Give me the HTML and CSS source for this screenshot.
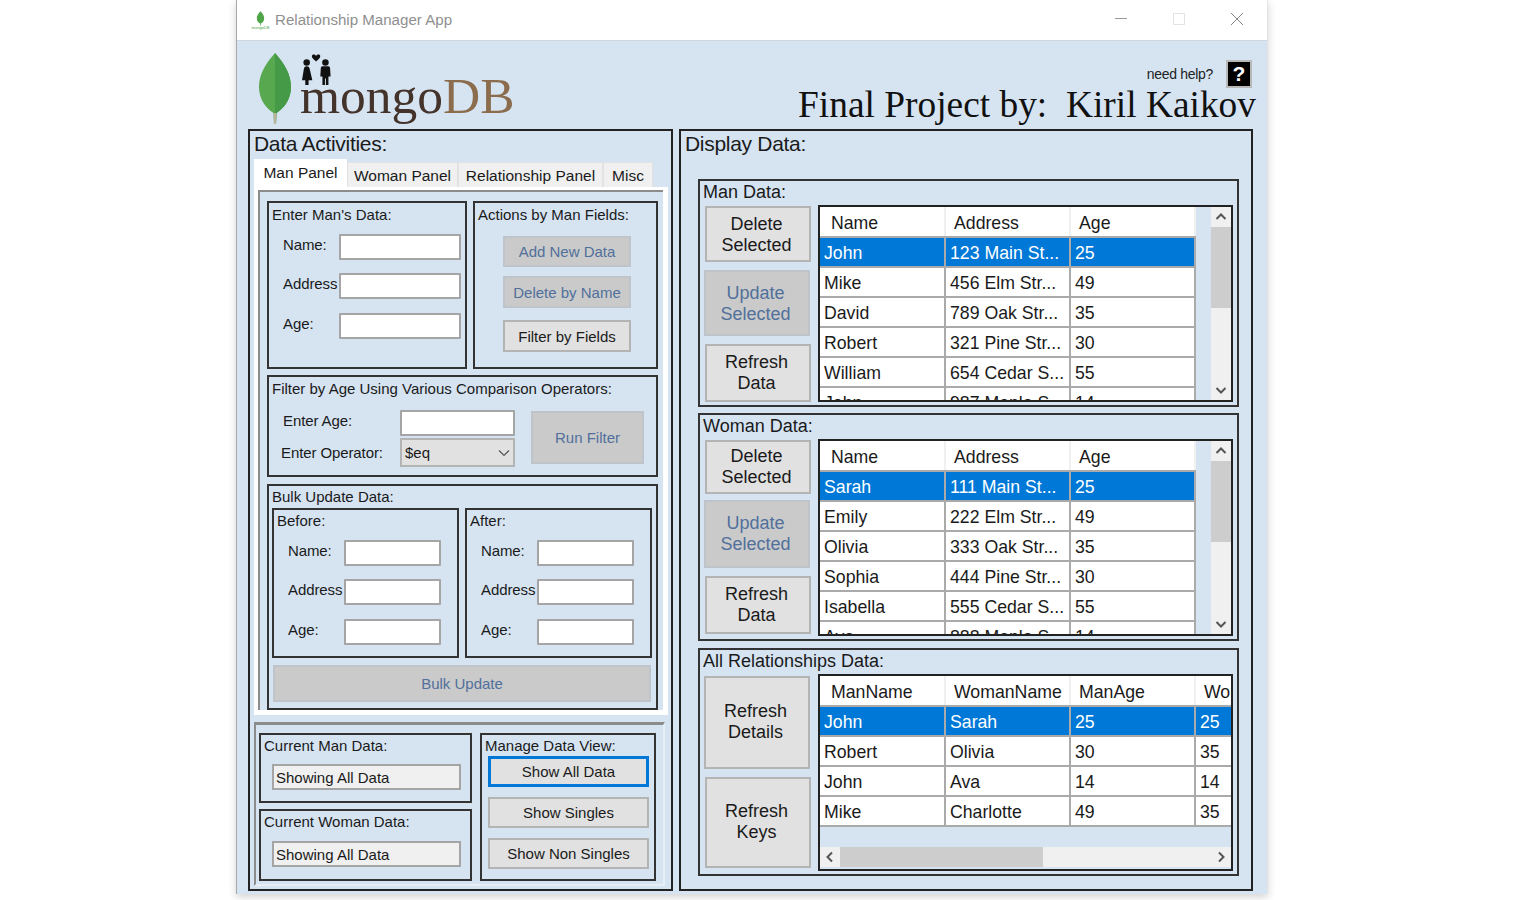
FILE: index.html
```html
<!DOCTYPE html>
<html lang="en">
<head>
    <meta charset="UTF-8">
    <meta name="viewport" content="width=device-width, initial-scale=1.0">
    <title>Relationship Manager App</title>
    <link rel="stylesheet" href="styles.css">
</head>
<body>
    <div class="window">
        <div class="titlebar">
            <div class="app-icon">
                <svg width="9" height="15" viewBox="0 0 10 16"><path d="M5 0C8 3 9.500 6 9 9 8.600 11.500 6.500 13 5.400 13.500L5.300 16H4.700L4.600 13.500C3.500 13 1.400 11.500 1 9 .5 6 2 3 5 0Z" fill="#4ea648"/></svg>
                <span class="app-icon-text">mongoDB</span>
            </div>
            <span class="app-name">Relationship Manager App</span>
            <div class="win-btns">
                <svg class="win-btn" width="14" height="14" viewBox="0 0 14 14"><path d="M1 6.500H13" stroke="#999" fill="none"/></svg>
                <svg class="win-btn" width="14" height="14" viewBox="0 0 14 14"><rect x="1.500" y="1.500" width="11" height="11" stroke="#e3e3e3" fill="none"/></svg>
                <svg class="win-btn" width="14" height="14" viewBox="0 0 14 14"><path d="M1 1L13 13M13 1L1 13" stroke="#888" fill="none"/></svg>
            </div>
        </div>

        <div class="header">
            <div class="logo">
                <svg class="leaf" width="34" height="72" viewBox="0 0 34 72">
                    <path d="M17 0C27 11 33 22 33 34 33 47 25 56 18.500 60L18 71H16L15.500 60C9 56 1 47 1 34 1 22 7 11 17 0Z" fill="#57a84f"/>
                    <path d="M17 0C27 11 33 22 33 34 33 47 25 56 18.500 60L18 71H17Z" fill="#459a47"/>
                    <path d="M15.500 60L16 71H18L18.500 60Z" fill="#b9b49a"/>
                </svg>
                <div class="logo-mark">
                    <svg class="couple" width="30" height="34" viewBox="0 0 32 34">
                        <circle cx="5" cy="9" r="3.500" fill="#111"/>
                        <path d="M5 13C7 13 8 14 8.500 17L11 28H7V33H3.500V28H0L1.800 17C2.200 14 3 13 5 13Z" fill="#111"/>
                        <circle cx="25" cy="9" r="3.500" fill="#111"/>
                        <path d="M22 13H28C29.500 13 30 14 30 16L30.500 24H28.200V33H25.500V26H24.500V33H21.800V24H19.500L20 16C20 14 20.500 13 22 13Z" fill="#111"/>
                        <path d="M15 8C12.500 5.500 10.500 4 10.500 2.300 10.500 .5 13.500 -.3 15 2 16.500 -.3 19.500 .5 19.500 2.300 19.500 4 17.500 5.500 15 8Z" fill="#111"/>
                    </svg>
                    <div class="wordmark"><span class="word-mongo">mongo</span><span class="word-db">DB</span></div>
                </div>
            </div>
            <div class="header-right">
                <div class="help-row">
                    <span class="help-text">need help?</span>
                    <span class="help-btn">?</span>
                </div>
                <div class="project-title">Final Project by:&nbsp; Kiril Kaikov</div>
            </div>
        </div>

        <div class="main">
            <div class="panel panel-left">
                <div class="panel-title">Data Activities:</div>
                <div class="tabs">
                    <div class="tab tab-active">Man Panel</div>
                    <div class="tab tab-woman">Woman Panel</div>
                    <div class="tab tab-rel">Relationship Panel</div>
                    <div class="tab tab-misc">Misc</div>
                </div>
                <div class="tab-page">
                    <div class="tab-inner">
                        <div class="top-row">
                            <div class="group group-enter">
                                <div class="group-title">Enter Man's Data:</div>
                                <div class="field-list">
                                    <div class="field"><label>Name:</label><input type="text"></div>
                                    <div class="field"><label>Address</label><input type="text"></div>
                                    <div class="field"><label>Age:</label><input type="text"></div>
                                </div>
                            </div>
                            <div class="group group-actions">
                                <div class="group-title">Actions by Man Fields:</div>
                                <div class="action-list">
                                    <button class="btn btn-off btn-add">Add New Data</button>
                                    <button class="btn btn-off btn-del">Delete by Name</button>
                                    <button class="btn btn-filter">Filter by Fields</button>
                                </div>
                            </div>
                        </div>

                        <div class="group group-age">
                            <div class="group-title">Filter by Age Using Various Comparison Operators:</div>
                            <div class="age-row">
                                <div class="age-labels">
                                    <label class="lbl-age">Enter Age:</label>
                                    <label class="lbl-op">Enter Operator:</label>
                                </div>
                                <div class="age-inputs">
                                    <input type="text" class="age-input">
                                    <div class="select">$eq
                                        <svg width="12" height="8" viewBox="0 0 12 8"><path d="M1 1.500L6 6.500 11 1.500" stroke="#555" fill="none" stroke-width="1.200"/></svg>
                                    </div>
                                </div>
                                <button class="btn btn-off btn-run">Run Filter</button>
                            </div>
                        </div>

                        <div class="group group-bulk">
                            <div class="group-title">Bulk Update Data:</div>
                            <div class="bulk-row">
                                <div class="group bulk-box">
                                    <div class="group-title">Before:</div>
                                    <div class="field-list field-list-bulk">
                                        <div class="field"><label>Name:</label><input type="text"></div>
                                        <div class="field"><label>Address</label><input type="text"></div>
                                        <div class="field"><label>Age:</label><input type="text"></div>
                                    </div>
                                </div>
                                <div class="group bulk-box">
                                    <div class="group-title">After:</div>
                                    <div class="field-list field-list-bulk">
                                        <div class="field"><label>Name:</label><input type="text"></div>
                                        <div class="field"><label>Address</label><input type="text"></div>
                                        <div class="field"><label>Age:</label><input type="text"></div>
                                    </div>
                                </div>
                            </div>
                            <button class="btn btn-off btn-bulk">Bulk Update</button>
                        </div>
                    </div>
                </div>

                <div class="bottom-box">
                    <div class="bottom-col">
                        <div class="group current-box">
                            <div class="group-title">Current Man Data:</div>
                            <div class="status">Showing All Data</div>
                        </div>
                        <div class="group current-box current-woman">
                            <div class="group-title">Current Woman Data:</div>
                            <div class="status">Showing All Data</div>
                        </div>
                    </div>
                    <div class="group manage-box">
                        <div class="group-title">Manage Data View:</div>
                        <div class="manage-list">
                            <button class="btn btn-manage btn-focus">Show All Data</button>
                            <button class="btn btn-manage">Show Singles</button>
                            <button class="btn btn-manage">Show Non Singles</button>
                        </div>
                    </div>
                </div>
            </div>

            <div class="panel panel-right">
                <div class="panel-title">Display Data:</div>

                <div class="group data-group">
                    <div class="data-title">Man Data:</div>
                    <div class="data-row">
                        <div class="side-btns">
                            <button class="btn side-btn h-delete">Delete<br>Selected</button>
                            <button class="btn btn-off side-btn h-update">Update<br>Selected</button>
                            <button class="btn side-btn h-refresh">Refresh<br>Data</button>
                        </div>
                        <div class="grid">
                            <table class="grid-table">
                                <tr class="head"><th>Name</th><th>Address</th><th>Age</th></tr>
                                <tr class="sel"><td>John</td><td>123 Main St...</td><td>25</td></tr>
                                <tr><td>Mike</td><td>456 Elm Str...</td><td>49</td></tr>
                                <tr><td>David</td><td>789 Oak Str...</td><td>35</td></tr>
                                <tr><td>Robert</td><td>321 Pine Str...</td><td>30</td></tr>
                                <tr><td>William</td><td>654 Cedar S...</td><td>55</td></tr>
                                <tr><td>John</td><td>987 Maple S...</td><td>14</td></tr>
                            </table>
                            <div class="vscroll">
                                <svg class="arrow" width="20" height="20" viewBox="0 0 20 20"><path d="M5.500 12L10 7.500 14.500 12" stroke="#555" stroke-width="2" fill="none"/></svg>
                                <div class="vthumb"></div>
                                <div class="spacer"></div>
                                <svg class="arrow" width="20" height="20" viewBox="0 0 20 20"><path d="M5.500 8L10 12.500 14.500 8" stroke="#555" stroke-width="2" fill="none"/></svg>
                            </div>
                        </div>
                    </div>
                </div>

                <div class="group data-group">
                    <div class="data-title">Woman Data:</div>
                    <div class="data-row">
                        <div class="side-btns">
                            <button class="btn side-btn h-delete-w">Delete<br>Selected</button>
                            <button class="btn btn-off side-btn h-update-w">Update<br>Selected</button>
                            <button class="btn side-btn h-refresh">Refresh<br>Data</button>
                        </div>
                        <div class="grid">
                            <table class="grid-table">
                                <tr class="head"><th>Name</th><th>Address</th><th>Age</th></tr>
                                <tr class="sel"><td>Sarah</td><td>111 Main St...</td><td>25</td></tr>
                                <tr><td>Emily</td><td>222 Elm Str...</td><td>49</td></tr>
                                <tr><td>Olivia</td><td>333 Oak Str...</td><td>35</td></tr>
                                <tr><td>Sophia</td><td>444 Pine Str...</td><td>30</td></tr>
                                <tr><td>Isabella</td><td>555 Cedar S...</td><td>55</td></tr>
                                <tr><td>Ava</td><td>888 Maple S...</td><td>14</td></tr>
                            </table>
                            <div class="vscroll">
                                <svg class="arrow" width="20" height="20" viewBox="0 0 20 20"><path d="M5.500 12L10 7.500 14.500 12" stroke="#555" stroke-width="2" fill="none"/></svg>
                                <div class="vthumb"></div>
                                <div class="spacer"></div>
                                <svg class="arrow" width="20" height="20" viewBox="0 0 20 20"><path d="M5.500 8L10 12.500 14.500 8" stroke="#555" stroke-width="2" fill="none"/></svg>
                            </div>
                        </div>
                    </div>
                </div>

                <div class="group data-group data-group-rel">
                    <div class="data-title">All Relationships Data:</div>
                    <div class="data-row">
                        <div class="side-btns side-btns-rel">
                            <button class="btn side-btn h-details">Refresh<br>Details</button>
                            <button class="btn side-btn h-keys">Refresh<br>Keys</button>
                        </div>
                        <div class="grid grid-rel">
                            <div class="rel-view">
                                <table class="grid-table grid-table-rel">
                                    <tr class="head"><th>ManName</th><th>WomanName</th><th>ManAge</th><th>WomanAge</th></tr>
                                    <tr class="sel"><td>John</td><td>Sarah</td><td>25</td><td>25</td></tr>
                                    <tr><td>Robert</td><td>Olivia</td><td>30</td><td>35</td></tr>
                                    <tr><td>John</td><td>Ava</td><td>14</td><td>14</td></tr>
                                    <tr><td>Mike</td><td>Charlotte</td><td>49</td><td>35</td></tr>
                                </table>
                            </div>
                            <div class="hscroll">
                                <svg class="arrow" width="20" height="20" viewBox="0 0 20 20"><path d="M12 5.500L7.500 10 12 14.500" stroke="#555" stroke-width="2" fill="none"/></svg>
                                <div class="hthumb"></div>
                                <div class="spacer"></div>
                                <svg class="arrow" width="20" height="20" viewBox="0 0 20 20"><path d="M8 5.500L12.500 10 8 14.500" stroke="#555" stroke-width="2" fill="none"/></svg>
                            </div>
                        </div>
                    </div>
                </div>
            </div>
        </div>
    </div>
</body>
</html>
```

FILE: styles.css
```css
* {
    box-sizing: border-box;
}

html, body {
    height: 100%;
}

body {
    margin: 0;
    background-color: #fff;
    font-family: "Liberation Sans", Arial, sans-serif;
    color: #1a1a1a;
    overflow: hidden;
}

.window {
    margin-left: 236px;
    width: 1032px;
    height: 894px;
    background-color: #d6e4f2;
    border-left: 1px solid #a8a8a8;
    border-right: 1px solid #e4e4e4;
    box-shadow: 0 3px 8px rgba(0, 0, 0, 0.18);
}

/* title bar */
.titlebar {
    display: flex;
    align-items: center;
    height: 41px;
    background-color: #fff;
    border-bottom: 1px solid #cfd6de;
    padding-left: 13px;
}

.app-icon {
    display: flex;
    flex-direction: column;
    align-items: center;
    width: 21px;
}

.app-icon svg {
    display: block;
}

.app-icon-text {
    font-size: 4px;
    line-height: 4px;
    color: #4ea648;
}

.app-name {
    margin-left: 4px;
    margin-top: -2px;
    font-size: 15.100px;
    color: #8f8f8f;
}

.win-btns {
    display: flex;
    gap: 44px;
    margin-left: auto;
    margin-right: 23px;
    margin-top: -2px;
}

/* logo + title */
.header {
    display: flex;
    justify-content: space-between;
    height: 88px;
    padding-left: 21px;
    padding-right: 11px;
}

.logo {
    display: flex;
    padding-top: 12px;
}

.logo-mark {
    margin-left: 8px;
}

.couple {
    display: block;
    margin-left: 2px;
}

.wordmark {
    margin-top: -18px;
    font-family: "Liberation Serif", serif;
    font-size: 51.500px;
    line-height: 54px;
    white-space: nowrap;
}

.word-mongo {
    color: #44332b;
}

.word-db {
    color: #8b6d4d;
}

.header-right {
    display: flex;
    flex-direction: column;
    align-items: flex-end;
}

.help-row {
    display: flex;
    align-items: center;
    margin-top: 19px;
    margin-right: 4px;
}

.help-text {
    font-size: 14px;
    letter-spacing: -0.3px;
    color: #222;
}

.help-btn {
    display: flex;
    align-items: center;
    justify-content: center;
    width: 26px;
    height: 28px;
    margin-left: 13px;
    background-color: #000;
    border: 2px solid #b8b8b8;
    color: #fff;
    font-size: 21px;
    font-weight: bold;
}

.project-title {
    margin-top: -1px;
    font-family: "Liberation Serif", serif;
    font-size: 37.400px;
    line-height: 36px;
    color: #111;
    white-space: nowrap;
}

/* panels */
.main {
    display: flex;
    gap: 6px;
    padding-left: 11px;
}

.panel {
    height: 762px;
    border: 2px solid #222;
}

.panel-left {
    width: 425px;
    padding-left: 4px;
}

.panel-right {
    width: 574px;
    padding-left: 4px;
}

.panel-title {
    height: 29px;
    font-size: 21px;
    line-height: 26px;
    letter-spacing: -0.3px;
}

.panel-right .panel-title {
    height: 48px;
}

.group {
    border: 2px solid #333;
}

.group-title {
    font-size: 15px;
    line-height: 18px;
    padding-left: 3px;
    padding-top: 2px;
    white-space: nowrap;
}

/* tabs */
.tabs {
    display: flex;
    align-items: flex-end;
    height: 27px;
}

.tab {
    height: 25px;
    background-color: #f0f0f0;
    border: 1px solid #e2e2e2;
    border-bottom: none;
    font-size: 15.500px;
    line-height: 26px;
    text-align: center;
    white-space: nowrap;
}

.tab-active {
    width: 93px;
    height: 28px;
    background-color: #fff;
    border: none;
    line-height: 27px;
}

.tab-woman {
    width: 111px;
}

.tab-rel {
    width: 145px;
}

.tab-misc {
    width: 50px;
}

.tab-page {
    width: 414px;
    height: 528px;
    background-color: #fff;
    padding: 3px 5px 5px 4px;
}

.tab-inner {
    height: 100%;
    background-color: #d6e4f2;
    border-top: 2px solid #8c8c8c;
    border-left: 2px solid #8c8c8c;
    padding: 9px 0 0 7px;
}

.top-row {
    display: flex;
    gap: 6px;
}

.top-row .group-title {
    padding-top: 3px;
}

.group-enter {
    width: 200px;
    height: 168px;
}

.group-actions {
    width: 185px;
    height: 168px;
}

input[type="text"] {
    display: block;
    height: 26px;
    background-color: #fff;
    border: 2px solid #a5a5a5;
    border-radius: 1px;
    padding: 0;
    margin: 0;
}

.field-list {
    display: flex;
    flex-direction: column;
    gap: 13px;
    padding-left: 14px;
    padding-top: 10px;
}

.field {
    display: flex;
    align-items: center;
}

.field:last-child {
    margin-top: 1px;
}

.field label {
    width: 56px;
    font-size: 15px;
    letter-spacing: -0.1px;
    margin-top: -5px;
    white-space: nowrap;
}

.field input {
    width: 122px;
}

.field-list-bulk input[type="text"] {
    width: 97px;
}

.btn {
    display: block;
    padding: 0;
    margin: 0;
    font-family: "Liberation Sans", Arial, sans-serif;
    font-size: 15px;
    color: #1a1a1a;
    background-color: #e1e1e1;
    border: 2px solid #b4b4b4;
    border-radius: 0;
}

.btn-off {
    background-color: #cacaca;
    border-color: #bfc4ca;
    color: #51709b;
}

.action-list {
    display: flex;
    flex-direction: column;
    align-items: flex-start;
    padding-left: 28px;
    padding-top: 12px;
}

.action-list .btn {
    width: 128px;
    height: 32px;
}

.action-list .btn-add {
    height: 31px;
}

.btn-del {
    margin-top: 9px;
}

.btn-filter {
    margin-top: 12px;
}

.group-age {
    width: 391px;
    height: 102px;
    margin-top: 6px;
}

.group-age .group-title {
    padding-top: 3px;
}

.age-row {
    display: flex;
    padding-top: 12px;
}

.age-labels {
    display: flex;
    flex-direction: column;
    width: 131px;
    font-size: 15px;
    letter-spacing: -0.1px;
}

.lbl-age {
    padding-left: 14px;
    margin-top: 2px;
}

.lbl-op {
    padding-left: 12px;
    margin-top: 15px;
}

.age-inputs {
    width: 115px;
}

.age-input {
    width: 115px;
}

.select {
    display: flex;
    align-items: center;
    justify-content: space-between;
    height: 29px;
    margin-top: 2px;
    padding: 0 3px 0 3px;
    background-color: #e1e1e1;
    border: 2px solid #b4b4b4;
    font-size: 15px;
}

.btn-run {
    width: 113px;
    height: 53px;
    margin-left: 16px;
    margin-top: 1px;
}

.group-bulk {
    width: 391px;
    height: 226px;
    margin-top: 7px;
}

.bulk-row {
    display: flex;
    gap: 6px;
    padding-left: 3px;
    padding-top: 2px;
}

.bulk-box {
    width: 187px;
    height: 150px;
}

.btn-bulk {
    width: 378px;
    height: 37px;
    margin-top: 7px;
    margin-left: 4px;
}

/* lower left box */
.bottom-box {
    display: flex;
    width: 411px;
    height: 164px;
    margin-top: 7px;
    border-top: 3px solid #8c8c8c;
    border-left: 2px solid #8c8c8c;
    border-bottom: 2px solid #e8eef5;
    border-right: 2px solid #e8eef5;
    padding: 8px 0 0 3px;
}

.bottom-col {
    display: flex;
    flex-direction: column;
    gap: 6px;
    width: 213px;
}

.current-box {
    height: 70px;
}

.current-woman {
    height: 72px;
}

.status {
    width: 189px;
    height: 26px;
    margin-top: 9px;
    margin-left: 11px;
    padding-left: 2px;
    background-color: #f0f0f0;
    border: 2px solid #a5a5a5;
    font-size: 15px;
    line-height: 24px;
}

.current-woman .status {
    margin-top: 10px;
}

.manage-box {
    width: 176px;
    height: 148px;
    margin-left: 8px;
}

.manage-list {
    display: flex;
    flex-direction: column;
    gap: 10px;
    padding-left: 6px;
    padding-top: 1px;
}

.btn-manage {
    width: 161px;
    height: 31px;
}

.btn-focus {
    border: 3px solid #0078d7;
}

/* right side */
.data-group {
    width: 541px;
    height: 228px;
    margin-left: 13px;
    margin-bottom: 6px;
}

.data-group-rel {
    margin-top: 7px;
}

.data-title {
    height: 24px;
    font-size: 18px;
    line-height: 22px;
    padding-left: 3px;
}

.data-row {
    display: flex;
}

.side-btns {
    display: flex;
    flex-direction: column;
    width: 118px;
    padding-left: 5px;
}

.side-btn {
    width: 106px;
    padding-right: 3px;
    font-size: 18px;
    line-height: 21px;
}

.h-delete {
    height: 56px;
    margin-top: 1px;
    padding-top: 2px;
}

.h-update {
    height: 66px;
    margin-top: 8px;
    margin-left: -1px;
    padding-top: 2px;
}

.h-refresh {
    height: 58px;
    margin-top: 8px;
}

.h-delete-w {
    height: 54px;
    margin-top: 1px;
}

.h-update-w {
    height: 68px;
    margin-top: 6px;
    margin-left: -1px;
}

.side-btns-rel {
    padding-top: 2px;
}

.h-details {
    height: 93px;
    margin-left: -1px;
    padding-bottom: 2px;
}

.h-keys {
    height: 91px;
    margin-top: 8px;
    padding-bottom: 1px;
}

.grid {
    display: flex;
    justify-content: space-between;
    width: 415px;
    height: 197px;
    border: 2px solid #222;
    overflow: hidden;
}

.grid-table {
    flex: none;
    width: 376px;
    height: 210px;
    border-collapse: collapse;
    table-layout: fixed;
    font-size: 17.700px;
}

.grid-table th, .grid-table td {
    height: 30px;
    padding: 2px 0 0 4px;
    text-align: left;
    font-weight: normal;
    white-space: nowrap;
    overflow: hidden;
    background-color: #fff;
    border-right: 2px solid #aaa;
    border-bottom: 2px solid #aaa;
}

.grid-table td:first-child {
    padding-left: 4px;
}

.grid-table th {
    padding-top: 3px;
    padding-left: 8px;
    border-right: 2px solid #f0f0f0;
}

.grid-table th:first-child {
    padding-left: 11px;
}

.grid-table .sel td {
    background-color: #0078d7;
    color: #fff;
}

.vscroll {
    display: flex;
    flex-direction: column;
    flex: none;
    width: 20px;
    height: 100%;
    background-color: #f0f0f0;
}

.arrow {
    display: block;
    flex: none;
}

.vthumb {
    height: 81px;
    background-color: #cdcdcd;
}

.spacer {
    flex: 1;
}

.grid-rel {
    flex-direction: column;
    justify-content: flex-start;
}

.rel-view {
    height: 171px;
    overflow: hidden;
}

.grid-table-rel {
    width: 501px;
    height: 150px;
}

.hscroll {
    display: flex;
    height: 20px;
    background-color: #f0f0f0;
}

.hthumb {
    width: 203px;
    background-color: #cdcdcd;
}
```
